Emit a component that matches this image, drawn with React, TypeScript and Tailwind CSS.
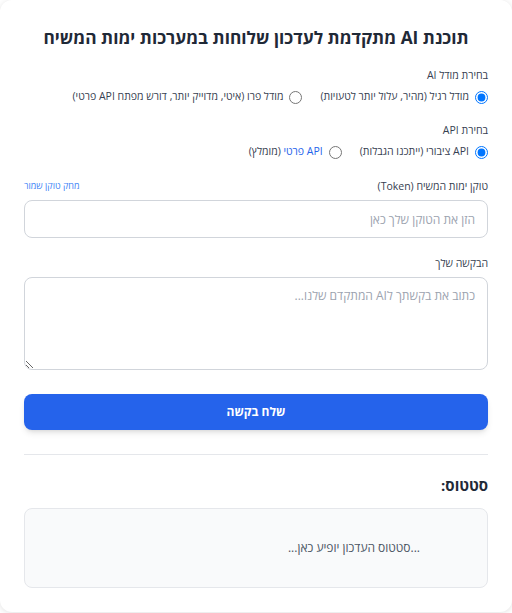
import React from "react";

export default function App() {
  return (
    <div dir="rtl" className="min-h-screen bg-white font-['Open_Sans',sans-serif]">
      <div className="bg-white rounded-xl shadow-[0_1px_6px_rgba(0,0,0,0.12)] px-6 pt-6 pb-6 text-[#1f2937]">
        <h1 className="text-[17.3px] leading-[28px] font-bold text-center text-[#1f2937] mb-[15px]">
          תוכנת AI מתקדמת לעדכון שלוחות במערכות ימות המשיח
        </h1>

        <div className="mb-[15px]">
          <div className="text-[10.5px] leading-4 text-[#374151] mb-1">בחירת מודל AI</div>
          <div className="flex items-center gap-[18px] h-5 text-[10.5px] text-[#374151]">
            <label className="flex items-center gap-[6px]">
              <input type="radio" name="model" defaultChecked className="m-0 w-[13px] h-[13px]" />
              <span>מודל רגיל (מהיר, עלול יותר לטעויות)</span>
            </label>
            <label className="flex items-center gap-[6px]">
              <input type="radio" name="model" className="m-0 w-[13px] h-[13px]" />
              <span>מודל פרו (איטי, מדוייק יותר, דורש מפתח API פרטי)</span>
            </label>
          </div>
        </div>

        <div className="mb-4">
          <div className="text-[10.5px] leading-4 text-[#374151] mb-1">בחירת API</div>
          <div className="flex items-center gap-[18px] h-5 text-[10.5px] text-[#374151]">
            <label className="flex items-center gap-[6px]">
              <input type="radio" name="api" defaultChecked className="m-0 w-[13px] h-[13px]" />
              <span>API ציבורי (ייתכנו הגבלות)</span>
            </label>
            <label className="flex items-center gap-[6px]">
              <input type="radio" name="api" className="m-0 w-[13px] h-[13px]" />
              <span>
                <span className="text-[#2563eb]">API פרטי</span> (מומלץ)
              </span>
            </label>
          </div>
        </div>

        <div className="mb-[17px]">
          <div className="flex items-center justify-between h-4 mb-[6px]">
            <span className="text-[10.5px] leading-4 text-[#374151]">טוקן ימות המשיח (Token)</span>
            <span className="text-[9px] leading-4 text-[#3b82f6]">מחק טוקן שמור</span>
          </div>
          <input
            type="text"
            placeholder="הזן את הטוקן שלך כאן"
            className="block w-full h-[38px] px-3 border border-[#d1d5db] rounded-lg text-[12px] placeholder:text-[#9ca3af] outline-none"
          />
        </div>

        <div className="mb-6">
          <div className="text-[10.5px] leading-4 text-[#374151] mb-[6px]">הבקשה שלך</div>
          <textarea
            placeholder="כתוב את בקשתך לAI המתקדם שלנו..."
            className="block w-full h-[93px] px-3 pt-[10px] border border-[#d1d5db] rounded-lg text-[12px] leading-4 placeholder:text-[#9ca3af] outline-none"
          />
        </div>

        <button className="block w-full h-9 bg-[#2563eb] text-white font-bold text-[12px] rounded-lg shadow-md">
          שלח בקשה
        </button>

        <div className="border-t border-[#e5e7eb] mt-6 pt-5">
          <h2 className="text-[15px] leading-5 font-bold text-[#1f2937] mb-[13px]">סטטוס:</h2>
          <div className="h-20 bg-[#f9fafb] border border-[#e5e7eb] rounded-lg flex items-center pr-[67px] text-[12px] text-[#4b5563]">
            <span>...סטטוס העדכון יופיע כאן...</span>
          </div>
        </div>
      </div>
    </div>
  );
}
